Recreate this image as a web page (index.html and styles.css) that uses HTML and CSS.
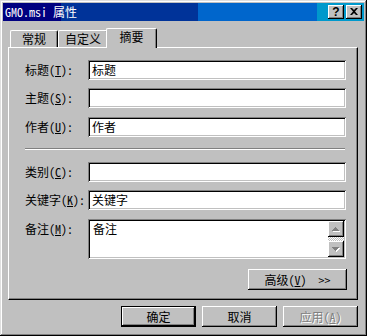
FILE: index.html
```html
<!DOCTYPE html>
<html lang="zh-CN">
<head>
  <meta charset="UTF-8">
  <title>GMO.msi 属性</title>
  <link rel="stylesheet" href="styles.css">
</head>
<body>
  <div class="window">
    <div class="titlebar">
      <span class="title">GMO.msi 属性</span>
      <div class="caption-buttons">
        <button class="btn-caption raised">?</button>
        <button class="btn-caption raised">
          <svg width="8" height="7" viewBox="0 0 8 7"><path d="M0 0h2l2 2 2-2h2L5 3.5 8 7H6L4 5 2 7H0l3-3.5z" fill="#000"/></svg>
        </button>
      </div>
    </div>

    <div class="tabs">
      <div class="tab tab-general">常规</div>
      <div class="tab tab-custom">自定义</div>
      <div class="tab tab-summary active">摘要</div>
    </div>

    <div class="panel">
      <div class="field">
        <label>标题(<u>T</u>):</label>
        <div class="input">标题</div>
      </div>
      <div class="field">
        <label>主题(<u>S</u>):</label>
        <div class="input"></div>
      </div>
      <div class="field wide-gap">
        <label>作者(<u>U</u>):</label>
        <div class="input">作者</div>
      </div>

      <div class="separator"></div>

      <div class="field">
        <label>类别(<u>C</u>):</label>
        <div class="input"></div>
      </div>
      <div class="field">
        <label>关键字(<u>K</u>):</label>
        <div class="input">关键字</div>
      </div>
      <div class="field memo-field wide-gap">
        <label>备注(<u>M</u>):</label>
        <div class="input memo">
          <div class="memo-text">备注</div>
          <div class="scrollbar">
            <div class="scroll-btn raised">
              <svg width="8" height="5" viewBox="0 0 8 5">
                <path d="M4 1h1v1H4zM3 2h3v1H3zM2 3h5v1H2zM1 4h7v1H1z" fill="#fff"/>
                <path d="M3 0h1v1H3zM2 1h3v1H2zM1 2h5v1H1zM0 3h7v1H0z" fill="#808080"/>
              </svg>
            </div>
            <div class="scroll-track"></div>
            <div class="scroll-btn raised">
              <svg width="8" height="5" viewBox="0 0 8 5">
                <path d="M1 1h7v1H1zM2 2h5v1H2zM3 3h3v1H3zM4 4h1v1H4z" fill="#fff"/>
                <path d="M0 0h7v1H0zM1 1h5v1H1zM2 2h3v1H2zM3 3h1v1H3z" fill="#808080"/>
              </svg>
            </div>
          </div>
        </div>
      </div>

      <div class="advanced-row">
        <button class="btn raised btn-advanced">高级(<u>V</u>)&nbsp;&nbsp;&gt;&gt;</button>
      </div>
    </div>

    <div class="footer">
      <button class="btn raised btn-default">确定</button>
      <button class="btn raised">取消</button>
      <button class="btn raised btn-disabled">应用(<u>A</u>)</button>
    </div>
  </div>
</body>
</html>
```

FILE: styles.css
```css
html, body {
  margin: 0;
  padding: 0;
  background: #c0c0c0;
  font-family: "Noto Sans Mono CJK SC", "Noto Sans CJK SC", sans-serif;
  font-size: 12px;
  color: #000;
}

button {
  font: inherit;
  color: inherit;
  border: none;
  padding: 0;
  margin: 0;
  background: #c0c0c0;
}

.raised {
  box-shadow: inset -1px -1px #000, inset 1px 1px #fff, inset -2px -2px #808080;
}

.window {
  width: 367px;
  height: 336px;
  box-sizing: border-box;
  padding: 3px;
  background: #c0c0c0;
  box-shadow: inset -1px -1px #000, inset 1px 1px #dfdfdf, inset -2px -2px #808080, inset 2px 2px #fff;
  display: flex;
  flex-direction: column;
}

/* barra de titulo con degradado en bandas */
.titlebar {
  height: 18px;
  flex: none;
  display: flex;
  align-items: center;
  justify-content: space-between;
  padding: 0 2px;
  color: #fff;
  background: linear-gradient(to right, #000080 0 58px, #003399 58px 195px, #0066cc 195px 314px, #0099cc 314px);
}

.title {
  line-height: 18px;
  white-space: pre;
}

.caption-buttons {
  display: flex;
  gap: 2px;
}

.btn-caption {
  width: 16px;
  height: 14px;
  display: flex;
  align-items: center;
  justify-content: center;
  font-family: "Liberation Sans", sans-serif;
  font-weight: bold;
  font-size: 12px;
  line-height: 12px;
  color: #000;
}

.btn-caption svg {
  display: block;
  margin-top: -1px;
}

/* pestañas */
.tabs {
  flex: none;
  display: flex;
  align-items: flex-end;
  height: 19px;
  margin: 7px 0 0 7px;
}

.tab {
  height: 17px;
  box-sizing: border-box;
  border-left: 1px solid #fff;
  border-top: 1px solid #fff;
  border-right: 1px solid #000;
  border-radius: 2px 2px 0 0;
  box-shadow: inset -1px 0 #808080;
  line-height: 16px;
  text-align: center;
  background: #c0c0c0;
}

.tab-general { width: 48px; }
.tab-custom { width: 50px; }

.tab.active {
  width: 51px;
  height: 20px;
  margin: 0 -2px -1px -2px;
  position: relative;
  z-index: 1;
}

.panel {
  flex: none;
  height: 253px;
  box-sizing: border-box;
  margin: 0 6px 0 5px;
  border-top: 1px solid #fff;
  border-left: 1px solid #fff;
  border-right: 1px solid #000;
  border-bottom: 1px solid #000;
  box-shadow: inset -1px -1px #808080;
  padding: 12px 10px 0 16px;
  display: flex;
  flex-direction: column;
  gap: 8px;
}

.field {
  display: flex;
  align-items: center;
  height: 20px;
}

.field label {
  width: 63px;
  flex: none;
  white-space: nowrap;
  line-height: 20px;
}

.wide-gap {
  margin-top: 1px;
}

.input {
  width: 258px;
  height: 20px;
  box-sizing: border-box;
  background: #fff;
  box-shadow: inset 1px 1px #808080, inset -1px -1px #fff, inset 2px 2px #000, inset -2px -2px #c0c0c0;
  padding-left: 4px;
  line-height: 20px;
}

.separator {
  height: 0;
  border-top: 1px solid #808080;
  border-bottom: 1px solid #fff;
  margin: 3px 2px 4px 0;
}

.memo-field {
  height: 40px;
  align-items: flex-start;
}

.memo {
  height: 40px;
  display: flex;
  padding: 2px 2px 2px 0;
}

.memo-text {
  flex: 1;
  padding-left: 5px;
  line-height: 16px;
}

.scrollbar {
  width: 16px;
  display: flex;
  flex-direction: column;
}

.scroll-btn {
  height: 16px;
  flex: none;
  background: #c0c0c0;
  display: flex;
  align-items: center;
  justify-content: center;
}

.scroll-track {
  flex: 1;
  background: repeating-conic-gradient(#fff 0 25%, #c0c0c0 0 50%);
  background-size: 2px 2px;
}

.advanced-row {
  display: flex;
  justify-content: flex-end;
  margin-top: 2px;
}

.btn {
  width: 75px;
  height: 21px;
  box-sizing: border-box;
  line-height: 19px;
  text-align: center;
}

.btn-advanced {
  width: 99px;
}

.footer {
  flex: none;
  display: flex;
  justify-content: flex-end;
  gap: 6px;
  margin-top: 6px;
  padding-right: 6px;
}

.btn-default {
  border: 1px solid #000;
}

.btn-disabled {
  color: #808080;
  text-shadow: 1px 1px #fff;
}
```
